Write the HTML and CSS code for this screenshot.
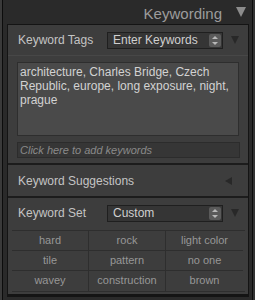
FILE: index.html
```html
<!DOCTYPE html>
<html lang="en">

<head>
  <meta charset="UTF-8">
  <title>Keywording</title>
  <link rel="stylesheet" href="styles.css">
</head>

<body>
  <div class="app">
    <div class="rail">
      <div class="panel-head">
        <span class="panel-title">Keywording</span>
        <span class="tri-down big"></span>
      </div>

      <div class="panel">
        <!-- Keyword Tags -->
        <div class="section tags">
          <div class="row">
            <span class="label">Keyword Tags</span>
            <div class="select">
              <span>Enter Keywords</span>
              <span class="spin"></span>
            </div>
            <span class="tri-down"></span>
          </div>
          <div class="keywords">architecture, Charles Bridge, Czech Republic, europe, long exposure, night, prague</div>
          <div class="add-input">Click here to add keywords</div>
        </div>

        <!-- Keyword Suggestions -->
        <div class="section">
          <div class="row tall">
            <span class="label wide">Keyword Suggestions</span>
            <span class="tri-left"></span>
          </div>
        </div>

        <!-- Keyword Set -->
        <div class="section last">
          <div class="row short">
            <span class="label">Keyword Set</span>
            <div class="select">
              <span>Custom</span>
              <span class="spin"></span>
            </div>
            <span class="tri-down"></span>
          </div>
          <div class="set-grid">
            <div class="cell">hard</div>
            <div class="cell">rock</div>
            <div class="cell">light color</div>
            <div class="cell">tile</div>
            <div class="cell">pattern</div>
            <div class="cell">no one</div>
            <div class="cell">wavey</div>
            <div class="cell">construction</div>
            <div class="cell">brown</div>
          </div>
        </div>
      </div>
    </div>
  </div>
</body>

</html>
```

FILE: styles.css
```css
* {
  box-sizing: border-box;
  margin: 0;
  padding: 0;
}

body {
  background: #262626;
  font-family: 'Liberation Sans', Arial, sans-serif;
  width: 255px;
  height: 300px;
  overflow: hidden;
}

.app {
  height: 300px;
  border-left: 2px solid #3a3a3a;
  border-right: 2px solid #333;
}

.rail {
  height: 300px;
  border-left: 1px solid #0c0c0c;
  border-right: 1px solid #0c0c0c;
  background: #2a2a2a;
  padding: 0 3px 0 4px;
}

.panel-head {
  height: 24px;
  display: flex;
  align-items: center;
  justify-content: flex-end;
  padding-right: 3px;
}

.panel-title {
  font-size: 15px;
  color: #9c9c9c;
  margin-right: 14px;
  margin-top: 2px;
}

.tri-down {
  width: 0;
  height: 0;
  border-left: 4px solid transparent;
  border-right: 4px solid transparent;
  border-top: 8px solid #282828;
  margin-left: 8px;
}

.tri-down.big {
  border-left-width: 5px;
  border-right-width: 5px;
  border-top: 10px solid #8c8c8c;
  margin-left: 0;
}

.tri-left {
  width: 0;
  height: 0;
  border-top: 4px solid transparent;
  border-bottom: 4px solid transparent;
  border-right: 7px solid #282828;
  margin-left: auto;
  margin-right: 8px;
}

.panel {
  border: 1px solid #141414;
  border-bottom-width: 3px;
  background: #3d3d3d;
  height: 273px;
}

.section {
  border-bottom: 2px solid #1c1c1c;
}

.section.last {
  border-bottom: none;
}

.row {
  display: flex;
  align-items: center;
  height: 31px;
  padding: 0 8px 0 10px;
}

.row.short {
  height: 30px;
}

.tags .row {
  border-bottom: 1px solid #474747;
}

.label {
  font-size: 12px;
  color: #c4c4c4;
  width: 89px;
  flex-shrink: 0;
  white-space: nowrap;
}

.label.wide {
  width: auto;
}

.select {
  display: flex;
  align-items: center;
  justify-content: space-between;
  width: 116px;
  height: 17px;
  background: #353535;
  border: 1px solid #1f1f1f;
  font-size: 12px;
  color: #cfcfcf;
  padding-left: 5px;
}

.spin {
  width: 12px;
  height: 13px;
  margin-right: 1px;
  background: #5a5a5a;
  border-radius: 2px;
  position: relative;
}

.spin::before,
.spin::after {
  content: "";
  position: absolute;
  left: 3px;
  border-left: 3px solid transparent;
  border-right: 3px solid transparent;
}

.spin::before {
  top: 2px;
  border-bottom: 3px solid #b8b8b8;
}

.spin::after {
  bottom: 2px;
  border-top: 3px solid #b8b8b8;
}

.keywords {
  margin: 6px 9px 0 9px;
  height: 74px;
  background: #4a4a4a;
  border: 1px solid #2e2e2e;
  font-size: 12px;
  line-height: 14px;
  color: #d2d2d2;
  padding: 2px 2px 0 2px;
}

.add-input {
  margin: 6px 8px 5px 9px;
  height: 16px;
  background: #363636;
  border: 1px solid #2c2c2c;
  font-size: 11px;
  font-style: italic;
  color: #8a8a8a;
  padding-left: 2px;
  line-height: 14px;
}

.set-grid {
  display: grid;
  grid-template-columns: 77px 77px 77px;
  margin: 2px 3px 0 4px;
  border-top: 1px solid #2e2e2e;
  border-bottom: 1px solid #2e2e2e;
}

.cell {
  height: 20px;
  line-height: 19px;
  text-align: center;
  font-size: 11px;
  color: #979797;
  border-right: 1px solid #2e2e2e;
  border-bottom: 1px solid #2e2e2e;
}

.cell:nth-child(3n) {
  border-right: none;
}

.cell:nth-last-child(-n+3) {
  border-bottom: none;
}
```
